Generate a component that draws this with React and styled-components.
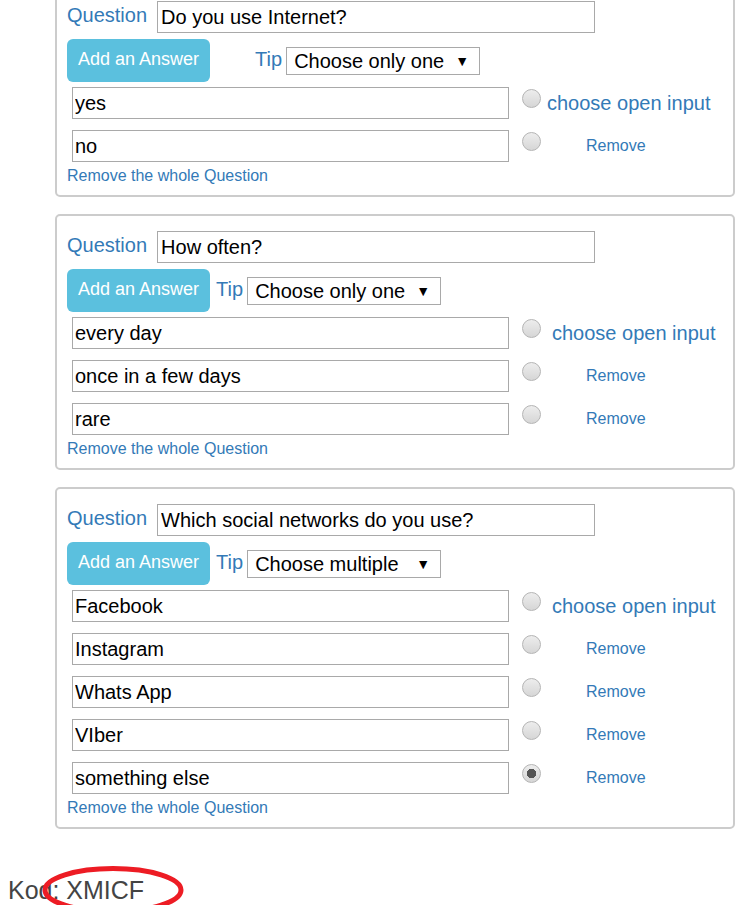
import React from "react";
import styled, { createGlobalStyle } from "styled-components";

const questions = [
  {
    id: 1,
    title: "Do you use Internet?",
    tip: "Choose only one",
    tipGap: 45,
    openGap: 6,
    answers: ["yes", "no"],
  },
  {
    id: 2,
    title: "How often?",
    tip: "Choose only one",
    tipGap: 6,
    openGap: 11,
    answers: ["every day", "once in a few days", "rare"],
  },
  {
    id: 3,
    title: "Which social networks do you use?",
    tip: "Choose multiple",
    tipGap: 6,
    openGap: 11,
    answers: ["Facebook", "Instagram", "Whats App", "VIber", "something else"],
    checked: 4,
  },
];

const tipOptions = ["Choose only one", "Choose multiple"];

const QuestionCard = ({ question }) => {
  return (
    <Card>
      <QuestionRow>
        <BlueLabel>Question</BlueLabel>
        <QuestionInput defaultValue={question.title} />
      </QuestionRow>
      <ToolRow>
        <AddButton>Add an Answer</AddButton>
        <TipLabel $gap={question.tipGap}>Tip</TipLabel>
        <SelectWrap>
          <TipSelect defaultValue={question.tip}>
            {tipOptions.map((opt) => (
              <option key={opt}>{opt}</option>
            ))}
          </TipSelect>
        </SelectWrap>
      </ToolRow>
      <AnswerList>
        {question.answers.map((answer, i) => (
          <AnswerRow key={answer}>
            <AnswerInput defaultValue={answer} />
            <Radio
              type="radio"
              name={`open-${question.id}`}
              defaultChecked={question.checked === i}
            />
            {i === 0 ? (
              <OpenLabel $gap={question.openGap}>choose open input</OpenLabel>
            ) : (
              <RemoveLink>Remove</RemoveLink>
            )}
          </AnswerRow>
        ))}
      </AnswerList>
      <RemoveQuestion>Remove the whole Question</RemoveQuestion>
    </Card>
  );
};

const App = () => {
  return (
    <>
      <GlobalStyle />
      <Page>
        <Questions>
          {questions.map((q) => (
            <QuestionCard key={q.id} question={q} />
          ))}
        </Questions>
        <Footer>
          Kod: XMICF
          <Circle width="150" height="60" viewBox="0 0 150 60">
            <ellipse
              cx="75"
              cy="30"
              rx="68"
              ry="21.5"
              fill="none"
              stroke="#ed1c24"
              strokeWidth="5"
            />
          </Circle>
        </Footer>
      </Page>
    </>
  );
};

const GlobalStyle = createGlobalStyle`
  body {
    margin: 0;
    background: #fff;
    font-family: "Liberation Sans", Arial, sans-serif;
    overflow: hidden;
  }
  * {
    box-sizing: border-box;
  }
`;

const Page = styled.div`
  padding: 0 8px;
`;

const Questions = styled.div`
  display: flex;
  flex-direction: column;
  gap: 17px;
  margin: -16px 5px 0 47px;
`;

const Card = styled.div`
  border: 2px solid #ccc;
  border-radius: 5px;
  padding: 15px 10px 10px;
`;

const QuestionRow = styled.div`
  display: flex;
  align-items: center;
  gap: 10px;
`;

const BlueLabel = styled.span`
  color: #337ab7;
  font-size: 20px;
  margin-top: -4px;
`;

const QuestionInput = styled.input`
  width: 438px;
  height: 32px;
  border: 1px solid #a9a9a9;
  padding: 0 3px;
  font-family: inherit;
  font-size: 20px;
  color: #000;
  outline: none;
`;

const ToolRow = styled.div`
  display: flex;
  align-items: center;
  margin-top: 6px;
`;

const AddButton = styled.button`
  height: 43px;
  padding: 0 11px 2px;
  border: none;
  border-radius: 6px;
  background-color: #5bc0de;
  color: #fff;
  font-family: inherit;
  font-size: 18px;
  cursor: pointer;
`;

const TipLabel = styled.span`
  color: #337ab7;
  font-size: 20px;
  margin-left: ${(p) => p.$gap}px;
  margin-right: 4px;
  margin-top: -3px;
`;

const SelectWrap = styled.div`
  position: relative;
  width: 194px;
  height: 28px;

  &::after {
    content: "▼";
    position: absolute;
    right: 11px;
    top: 7px;
    font-size: 14px;
    line-height: 1;
    color: #000;
    pointer-events: none;
  }
`;

const TipSelect = styled.select`
  appearance: none;
  width: 100%;
  height: 100%;
  border: 1px solid #a9a9a9;
  border-radius: 0;
  background: #fff;
  padding: 0 0 0 7px;
  font-family: inherit;
  font-size: 20px;
  color: #000;
  outline: none;
`;

const AnswerList = styled.div`
  display: flex;
  flex-direction: column;
  gap: 11px;
  margin-top: 5px;
  padding-left: 5px;
`;

const AnswerRow = styled.div`
  display: flex;
  align-items: flex-start;
`;

const AnswerInput = styled.input`
  width: 437px;
  height: 32px;
  border: 1px solid #a9a9a9;
  padding: 0 2px;
  font-family: inherit;
  font-size: 20px;
  color: #000;
  outline: none;
`;

const Radio = styled.input`
  appearance: none;
  width: 19px;
  height: 19px;
  margin: 2px 0 0 13px;
  border: 1px solid #b4b4b4;
  border-radius: 50%;
  background: linear-gradient(#ededed, #d6d6d6);
  flex-shrink: 0;

  &:checked {
    background: radial-gradient(circle, #555 0 4.5px, transparent 5px),
      linear-gradient(#ededed, #d6d6d6);
  }
`;

const OpenLabel = styled.span`
  color: #337ab7;
  font-size: 20px;
  line-height: 32px;
  white-space: nowrap;
  margin-left: ${(p) => p.$gap}px;
`;

const RemoveLink = styled.a`
  color: #337ab7;
  font-size: 16px;
  line-height: 32px;
  white-space: nowrap;
  margin-left: 45px;
  cursor: pointer;
`;

const RemoveQuestion = styled.a`
  display: block;
  margin-top: 5px;
  color: #337ab7;
  font-size: 16px;
  cursor: pointer;
`;

const Footer = styled.div`
  position: relative;
  width: fit-content;
  margin-top: 47px;
  font-size: 25px;
  color: #444;
`;

const Circle = styled.svg`
  position: absolute;
  left: 30px;
  top: -16px;
  overflow: visible;
  pointer-events: none;
`;

export default App;
